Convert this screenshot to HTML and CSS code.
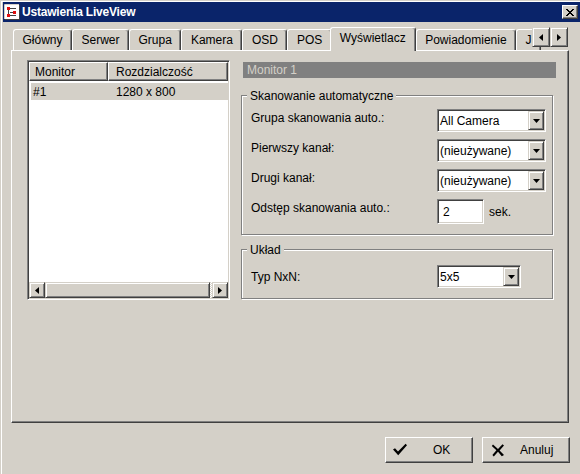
FILE: index.html
```html
<!DOCTYPE html>
<html lang="pl">
<head>
<meta charset="utf-8">
<title>Ustawienia LiveView</title>
<link rel="stylesheet" href="styles.css">
</head>
<body>
<div class="window">
  <div class="titlebar">
    <svg class="app-icon" width="16" height="16" viewBox="0 0 16 16">
      <rect x="1" y="1" width="14" height="14" fill="#fff"/>
      <path d="M1 15.5H15.5V1" fill="none" stroke="#404040"/>
      <path d="M0.5 15V0.5H15" fill="none" stroke="#D4D0C8"/>
      <path d="M6 4.5H12M4.5 6V10M6 11.5H12M6 8.5H9" stroke="#404040"/>
      <rect x="3" y="3" width="3" height="3" fill="#E01010"/>
      <rect x="3" y="10" width="3" height="3" fill="#E01010"/>
      <rect x="9" y="7" width="3" height="3" fill="#E01010"/>
    </svg>
    <span class="title">Ustawienia LiveView</span>
    <button class="close-btn" type="button" aria-label="Zamknij">
      <svg width="8" height="7" viewBox="0 0 8 7" shape-rendering="crispEdges"><path d="M0 0h2v1H0zM6 0h2v1H6zM1 1h2v1H1zM5 1h2v1H5zM2 2h4v1H2zM3 3h2v1H3zM2 4h4v1H2zM1 5h2v1H1zM5 5h2v1H5zM0 6h2v1H0zM6 6h2v1H6z" fill="#000"/></svg>
    </button>
  </div>

  <div class="content">
    <div class="tabstrip">
      <div class="tab">Główny</div>
      <div class="tab">Serwer</div>
      <div class="tab">Grupa</div>
      <div class="tab">Kamera</div>
      <div class="tab">OSD</div>
      <div class="tab">POS</div>
      <div class="tab active">Wyświetlacz</div>
      <div class="tab">Powiadomienie</div>
      <div class="tab">J</div>
      <div class="tab-scroll">
        <span class="raised-btn scroll-btn"><svg width="4" height="7" viewBox="0 0 4 7"><polygon points="4,0 4,7 0,3.5" fill="#000"/></svg></span>
        <span class="raised-btn scroll-btn"><svg width="4" height="7" viewBox="0 0 4 7"><polygon points="0,0 0,7 4,3.5" fill="#000"/></svg></span>
      </div>
    </div>

    <div class="panel">
      <div class="listview">
        <div class="lv-header">
          <div class="lv-head-cell col-monitor">Monitor</div>
          <div class="lv-head-cell col-res">Rozdzialczość</div>
        </div>
        <div class="lv-row selected">
          <span class="lv-cell cell-monitor">#1</span>
          <span class="lv-cell cell-res">1280 x 800</span>
        </div>
        <div class="lv-spacer"></div>
        <div class="hscroll">
          <span class="raised-btn sb-btn"><svg width="4" height="7" viewBox="0 0 4 7"><polygon points="4,0 4,7 0,3.5" fill="#000"/></svg></span>
          <span class="raised-btn sb-thumb"></span>
          <span class="raised-btn sb-btn"><svg width="4" height="7" viewBox="0 0 4 7"><polygon points="0,0 0,7 4,3.5" fill="#000"/></svg></span>
        </div>
      </div>

      <div class="settings">
        <div class="monitor-bar">Monitor 1</div>

        <div class="group">
          <span class="legend">Skanowanie automatyczne</span>
          <div class="field">
            <span class="field-label">Grupa skanowania auto.:</span>
            <div class="combo"><span class="combo-text">All Camera</span><span class="raised-btn combo-btn"><svg width="7" height="4" viewBox="0 0 7 4"><polygon points="0,0 7,0 3.5,4" fill="#000"/></svg></span></div>
          </div>
          <div class="field">
            <span class="field-label">Pierwszy kanał:</span>
            <div class="combo"><span class="combo-text">(nieużywane)</span><span class="raised-btn combo-btn"><svg width="7" height="4" viewBox="0 0 7 4"><polygon points="0,0 7,0 3.5,4" fill="#000"/></svg></span></div>
          </div>
          <div class="field">
            <span class="field-label">Drugi kanał:</span>
            <div class="combo"><span class="combo-text">(nieużywane)</span><span class="raised-btn combo-btn"><svg width="7" height="4" viewBox="0 0 7 4"><polygon points="0,0 7,0 3.5,4" fill="#000"/></svg></span></div>
          </div>
          <div class="field">
            <span class="field-label">Odstęp skanowania auto.:</span>
            <div class="edit">2</div>
            <span class="unit">sek.</span>
          </div>
        </div>

        <div class="group group-layout">
          <span class="legend">Układ</span>
          <div class="field field-center">
            <span class="field-label">Typ NxN:</span>
            <div class="combo combo-small"><span class="combo-text">5x5</span><span class="raised-btn combo-btn"><svg width="7" height="4" viewBox="0 0 7 4"><polygon points="0,0 7,0 3.5,4" fill="#000"/></svg></span></div>
          </div>
        </div>
      </div>
    </div>

    <div class="dialog-buttons">
      <button class="btn btn-ok" type="button">
        <svg class="btn-icon" width="16" height="16" viewBox="0 0 16 16"><path d="M1 7.5L3 6.2L6 9.6L13.6 1.8L15 3.2L6.2 13.2Z" fill="#000"/></svg>
        <span class="btn-label">OK</span>
      </button>
      <button class="btn btn-cancel" type="button">
        <svg class="btn-icon" width="16" height="16" viewBox="0 0 16 16"><path d="M3 2.5L8 7L12.5 2.2L14 3.5L9.6 8.4L14 13L11.8 14.2L8 9.8L3.8 14.6L2.4 13L6.4 8.3L1.8 4Z" fill="#000"/></svg>
        <span class="btn-label">Anuluj</span>
      </button>
    </div>
  </div>
</div>
</body>
</html>
```

FILE: styles.css
```css
* {
  box-sizing: border-box;
}

html,
body {
  margin: 0;
  padding: 0;
}

body {
  width: 580px;
  height: 474px;
  overflow: hidden;
  background: #D4D0C8;
  font-family: "Liberation Sans", Arial, sans-serif;
  font-size: 12px;
  color: #000;
}

.window {
  height: 474px;
  padding: 2px 0 0 3px;
  display: flex;
  flex-direction: column;
  box-shadow: inset 1px 1px 0 #D4D0C8, inset 2px 2px 0 #fff;
}

/* ---------- title bar ---------- */
.titlebar {
  flex: none;
  height: 20px;
  background: #0A246A;
  display: flex;
  align-items: center;
  padding: 0 2px 0 1px;
}

.app-icon {
  flex: none;
  display: block;
}

.title {
  flex: 1;
  margin-left: 2px;
  color: #fff;
  font-weight: bold;
  font-size: 12px;
  letter-spacing: -0.2px;
  white-space: nowrap;
}

.close-btn {
  width: 16px;
  height: 14px;
  padding: 0;
  margin: 0;
  background: #D4D0C8;
  border: 1px solid;
  border-color: #fff #404040 #404040 #fff;
  box-shadow: inset -1px -1px 0 #808080;
  display: flex;
  align-items: center;
  justify-content: center;
}

.close-btn svg {
  display: block;
}

/* ---------- generic raised button ---------- */
.raised-btn {
  background: #D4D0C8;
  border: 1px solid;
  border-color: #D4D0C8 #404040 #404040 #D4D0C8;
  box-shadow: inset 1px 1px 0 #fff, inset -1px -1px 0 #808080;
  display: flex;
  align-items: center;
  justify-content: center;
}

.raised-btn svg {
  display: block;
}

/* ---------- content ---------- */
.content {
  flex: 1;
  display: flex;
  flex-direction: column;
  margin: 5px 11px 0 8px;
}

.tabstrip {
  position: relative;
  height: 23px;
  display: flex;
  align-items: flex-end;
  padding-left: 2px;
}

.tab {
  height: 21px;
  padding: 0 8.5px;
  border: 1px solid #fff;
  border-bottom: none;
  border-right-color: #404040;
  border-radius: 3px 3px 0 0;
  box-shadow: inset -1px 0 0 #808080;
  display: flex;
  align-items: center;
  white-space: nowrap;
  background: #D4D0C8;
}

.tab.active {
  height: 24px;
  margin: 0 0 -1px -2px;
  padding: 0 9px 4px;
  position: relative;
  z-index: 1;
}

.tab-scroll {
  position: absolute;
  right: 1px;
  top: 0;
  display: flex;
  z-index: 2;
}

.scroll-btn {
  width: 18px;
  height: 20px;
}

.panel {
  height: 373px;
  display: flex;
  align-items: flex-start;
  padding: 9px 0 0 15px;
  border: 1px solid;
  border-color: #fff #404040 #404040 #fff;
  box-shadow: inset -1px -1px 0 #808080;
}

/* ---------- list view ---------- */
.listview {
  width: 203px;
  height: 240px;
  flex: none;
  padding: 1px;
  background: #fff;
  border: 1px solid;
  border-color: #808080 #fff #fff #808080;
  box-shadow: inset 1px 1px 0 #404040, inset -1px -1px 0 #D4D0C8;
  display: flex;
  flex-direction: column;
}

.lv-header {
  display: flex;
  height: 19px;
  flex: none;
}

.lv-head-cell {
  height: 19px;
  background: #D4D0C8;
  border: 1px solid;
  border-color: #fff #404040 #404040 #fff;
  box-shadow: inset -1px -1px 0 #808080;
  display: flex;
  align-items: center;
  white-space: nowrap;
}

.col-monitor {
  width: 79px;
  padding-left: 5px;
}

.col-res {
  flex: 1;
  padding-left: 7px;
}

.lv-row {
  display: flex;
  height: 17px;
  margin: 2px 0 0 2px;
  align-items: center;
}

.lv-row.selected {
  background: #D4D0C8;
}

.cell-monitor {
  width: 77px;
  padding-left: 2px;
}

.cell-res {
  padding-left: 8px;
}

.lv-spacer {
  flex: 1;
}

.hscroll {
  display: flex;
  height: 16px;
  flex: none;
  background: repeating-conic-gradient(#D4D0C8 0 25%, #fff 0 50%) 0 0 / 2px 2px;
}

.sb-btn {
  width: 16px;
  height: 16px;
  flex: none;
}

.sb-thumb {
  flex: 1;
  height: 16px;
  margin-right: 2px;
}

/* ---------- settings column ---------- */
.settings {
  width: 315px;
  margin-left: 11px;
  display: flex;
  flex-direction: column;
}

.monitor-bar {
  margin: 2px 0 0 2px;
  height: 16px;
  line-height: 16px;
  padding-left: 4px;
  background: #808080;
  color: #D4D0C8;
}

.group {
  margin-top: 17px;
  width: 312px;
  border: 1px solid #808080;
  box-shadow: inset 1px 1px 0 #fff, 1px 1px 0 #fff;
  padding: 0 0 10px 0;
  display: flex;
  flex-direction: column;
}

.group-layout {
  margin-top: 14px;
}

.legend {
  align-self: flex-start;
  margin: -7px 0 0 5px;
  padding: 0 3px;
  line-height: 14px;
  background: #D4D0C8;
  white-space: nowrap;
}

.field {
  display: flex;
  align-items: flex-start;
  margin: 7px 0 0 9px;
}

.legend + .field {
  margin-top: 6px;
}

.group-layout .legend + .field {
  margin-top: 8px;
}

.field-label {
  width: 186px;
  flex: none;
  padding-top: 2px;
  line-height: 14px;
  white-space: nowrap;
}

.field-center {
  align-items: center;
}

.field-center .field-label {
  padding-top: 0;
}

.combo {
  width: 109px;
  height: 23px;
  padding: 1px;
  background: #fff;
  border: 1px solid;
  border-color: #808080 #fff #fff #808080;
  box-shadow: inset 1px 1px 0 #404040, inset -1px -1px 0 #D4D0C8;
  display: flex;
  align-items: stretch;
}

.combo-small {
  width: 84px;
}

.combo-text {
  flex: 1;
  padding-left: 1px;
  display: flex;
  align-items: center;
  white-space: nowrap;
  overflow: hidden;
}

.combo-btn {
  width: 16px;
  flex: none;
}

.edit {
  width: 47px;
  height: 25px;
  padding: 0 0 0 5px;
  background: #fff;
  border: 1px solid;
  border-color: #808080 #fff #fff #808080;
  box-shadow: inset 1px 1px 0 #404040, inset -1px -1px 0 #D4D0C8;
  display: flex;
  align-items: center;
}

.unit {
  margin-left: 5px;
  align-self: center;
}

/* ---------- dialog buttons ---------- */
.dialog-buttons {
  display: flex;
  justify-content: flex-end;
  gap: 9px;
  margin: 14px -1px 0 0;
}

.btn {
  width: 88px;
  height: 26px;
  margin: 0;
  padding: 0;
  font: inherit;
  color: #000;
  background: #D4D0C8;
  border: 1px solid;
  border-color: #fff #404040 #404040 #fff;
  box-shadow: inset -1px -1px 0 #808080;
  display: flex;
  align-items: center;
}

.btn-icon {
  display: block;
  flex: none;
}

.btn-ok {
  padding-left: 6px;
}

.btn-ok .btn-label {
  margin-left: 25px;
}

.btn-cancel {
  padding-left: 7px;
}

.btn-cancel .btn-label {
  margin-left: 14px;
}
```
